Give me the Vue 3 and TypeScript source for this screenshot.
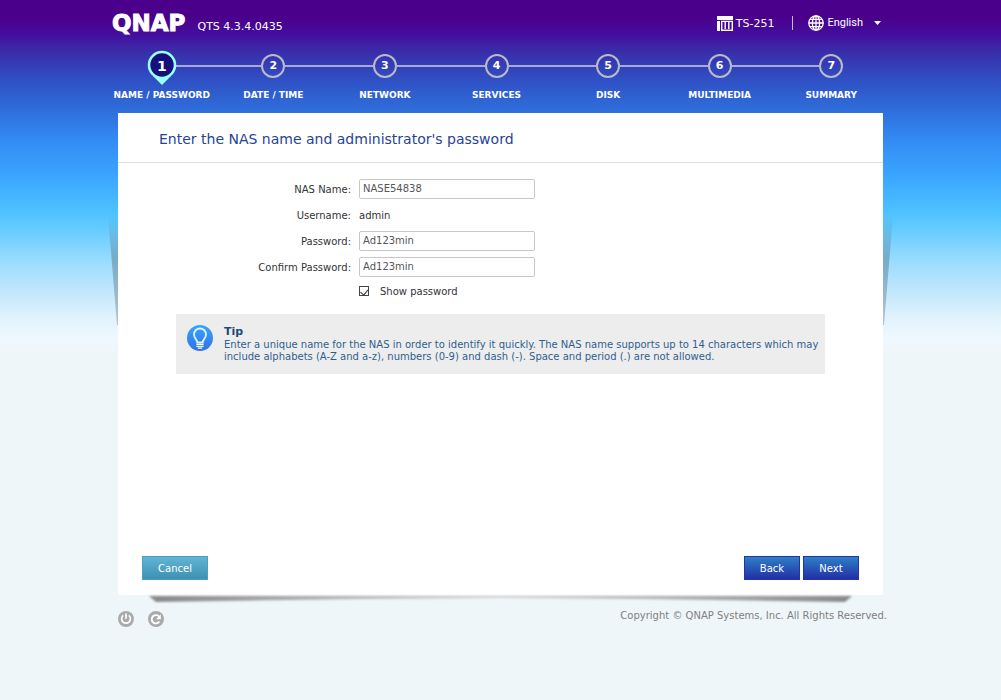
<script setup lang="ts">
import { computed, ref } from 'vue'

interface Step {
  id: number
  label: string
}

const steps: Step[] = [
  { id: 1, label: 'NAME / PASSWORD' },
  { id: 2, label: 'DATE / TIME' },
  { id: 3, label: 'NETWORK' },
  { id: 4, label: 'SERVICES' },
  { id: 5, label: 'DISK' },
  { id: 6, label: 'MULTIMEDIA' },
  { id: 7, label: 'SUMMARY' },
]

const current = ref(1)
const nasName = ref('NASE54838')
const password = ref('Ad123min')
const confirmation = ref('Ad123min')
const showPassword = ref(true)
const fieldType = computed(() => (showPassword.value ? 'text' : 'password'))
</script>

<template>
  <div class="page">
    <div class="wrap">
      <header class="top">
        <span class="brand">QNAP</span>
        <span class="version">QTS 4.3.4.0435</span>
        <div class="model">
          <svg width="16" height="15" viewBox="0 0 16 15" aria-hidden="true">
            <path d="M0 0h16v4H0z M0 5h3v10H0z" fill="#fff" />
            <path d="M4.7 5v9.5h10.6V5 M8.2 5v8 M11.8 5v8" fill="none" stroke="#fff" stroke-width="1.4" />
            <path d="M4 5.4h12M4 14.3h12" stroke="#fff" stroke-width="1.2" />
          </svg>
          <span>TS-251</span>
        </div>
        <span class="divider"></span>
        <button class="language" type="button">
          <svg width="16" height="16" viewBox="0 0 16 16" fill="none" stroke="#fff" stroke-width="1.3" aria-hidden="true">
            <circle cx="8" cy="8" r="7.2" />
            <ellipse cx="8" cy="8" rx="3.6" ry="7.2" />
            <path d="M8 .8v14.4M.8 8h14.4M2 4.4h12M2 11.6h12" />
          </svg>
          <span>English</span>
          <svg class="caret" width="7" height="4" viewBox="0 0 7 4" aria-hidden="true">
            <path d="M0 0h7L3.5 4z" fill="#fff" />
          </svg>
        </button>
      </header>

      <ol class="steps">
        <li v-for="step in steps" :key="step.id" class="step" :class="{ active: step.id === current }">
          <span class="marker">
            <svg v-if="step.id === current" class="pin" width="30" height="36" viewBox="0 0 30 36" aria-hidden="true">
              <path d="M6 26L15 35l9-9z" fill="#9ff" />
              <circle cx="15" cy="15" r="13" fill="#15107c" stroke="#9ff" stroke-width="2.6" />
            </svg>
            <span class="number">{{ step.id }}</span>
          </span>
          <span class="step-label">{{ step.label }}</span>
        </li>
      </ol>

      <main class="panel">
        <svg class="side left" viewBox="0 0 10 110" preserveAspectRatio="none" aria-hidden="true">
          <defs>
            <linearGradient id="side-shade" x1="0" y1="0" x2="0" y2="1">
              <stop offset="0" stop-color="#456" stop-opacity="0" />
              <stop offset=".4" stop-color="#456" stop-opacity=".36" />
              <stop offset="1" stop-color="#456" stop-opacity=".3" />
            </linearGradient>
          </defs>
          <path d="M0 0h10v110H9z" fill="url(#side-shade)" />
        </svg>
        <svg class="side right" viewBox="0 0 10 110" preserveAspectRatio="none" aria-hidden="true">
          <path d="M0 0h10v110H9z" fill="url(#side-shade)" />
        </svg>
        <div class="underside"></div>

        <h1>Enter the NAS name and administrator's password</h1>

        <form class="body" @submit.prevent>
          <div class="fields">
            <label for="nas-name">NAS Name:</label>
            <input id="nas-name" v-model="nasName" type="text" maxlength="14" />
            <span class="caption">Username:</span>
            <span>admin</span>
            <label for="password">Password:</label>
            <input id="password" v-model="password" :type="fieldType" />
            <label for="confirmation">Confirm Password:</label>
            <input id="confirmation" v-model="confirmation" :type="fieldType" />
            <label class="show" for="show-password">
              <input id="show-password" v-model="showPassword" type="checkbox" />
              <span>Show password</span>
            </label>
          </div>

          <section class="tip">
            <svg width="26" height="26" viewBox="0 0 26 26" aria-hidden="true">
              <defs>
                <linearGradient id="bulb-fill" x1="0" y1="0" x2="0" y2="1">
                  <stop offset="0" stop-color="#36a7f8" />
                  <stop offset="1" stop-color="#3170e8" />
                </linearGradient>
              </defs>
              <circle cx="13" cy="13" r="13" fill="url(#bulb-fill)" />
              <path d="M10.3 17.5c0-3-3.3-4-3.3-8a6 6 0 0 1 12 0c0 4-3.3 5-3.3 8z" fill="none" stroke="#e4f1ff" stroke-width="1.8" />
              <path d="M9.4 19.3h7.2M9.4 21.3h7.2M10.8 23.2h4.4" stroke="#fff" stroke-width="1.3" />
            </svg>
            <div>
              <h2>Tip</h2>
              <p>
                Enter a unique name for the NAS in order to identify it quickly. The NAS name supports up to 14
                characters which may include alphabets (A-Z and a-z), numbers (0-9) and dash (-). Space and period (.)
                are not allowed.
              </p>
            </div>
          </section>

          <div class="actions">
            <button class="cancel" type="button">Cancel</button>
            <button class="primary" type="button">Back</button>
            <button class="primary" type="submit">Next</button>
          </div>
        </form>
      </main>

      <footer class="bottom">
        <button class="round" type="button" aria-label="Shut down">
          <svg width="16" height="16" viewBox="0 0 16 16" aria-hidden="true">
            <circle cx="8" cy="8" r="8" fill="#aaa" />
            <path d="M5.2 4.4a4.4 4.4 0 1 0 5.6 0M8 2.6v5.2" fill="none" stroke="#fff" stroke-width="1.7" />
          </svg>
        </button>
        <button class="round" type="button" aria-label="Restart">
          <svg width="16" height="16" viewBox="0 0 16 16" aria-hidden="true">
            <circle cx="8" cy="8" r="8" fill="#aaa" />
            <path d="M11.4 10.6a4.2 4.2 0 1 1-.2-5" fill="none" stroke="#fff" stroke-width="1.8" />
            <path d="M12.8 3.4v4.8H8z" fill="#fff" />
          </svg>
        </button>
        <small>Copyright © QNAP Systems, Inc. All Rights Reserved.</small>
      </footer>
    </div>
  </div>
</template>

<style>
body {
  margin: 0;
  background: #eff6f9;
}
</style>

<style scoped>
* {
  box-sizing: border-box;
}

.page {
  min-height: 100vh;
  font-family: 'DejaVu Sans', Verdana, sans-serif;
  font-size: 10px;
  color: #333;
  background: linear-gradient(
    #4b008c 0,
    #4a008b 18px,
    #4310a0 36px,
    #3a2ba8 50px,
    #2f50c4 80px,
    #2f70dc 112px,
    #348cf4 142px,
    #3aa5ff 175px,
    #4cc0ff 210px,
    #66ccff 230px,
    #98dcfe 260px,
    #bfe6fd 290px,
    #e2f3fd 318px,
    #eff8fe 340px,
    #eff6f9 356px
  );
}

.wrap {
  max-width: 789px;
  margin: 0 auto;
}

button {
  padding: 0;
  border: 0;
  background: none;
  color: #fff;
  font: inherit;
  cursor: pointer;
}

svg {
  display: block;
  flex: none;
}

.top {
  display: flex;
  align-items: center;
  height: 46px;
  padding: 0 14px 0 6px;
  color: #fff;
  font-size: 11px;
}

.brand {
  font-size: 23px;
  font-weight: bold;
  line-height: 24px;
  -webkit-text-stroke: 1px #fff;
}

.version {
  margin-left: 12px;
  padding-top: 6px;
}

.model {
  display: flex;
  align-items: center;
  gap: 3px;
  margin-left: auto;
}

.divider {
  width: 1px;
  height: 14px;
  margin: 0 15px 0 18px;
  background: #cbb8e0;
}

.language {
  display: flex;
  align-items: center;
  gap: 3px;
  font-family: Roboto, sans-serif;
  font-size: 11px;
}

.language span {
  padding-bottom: 2px;
}

.caret {
  margin-left: 8px;
}

.steps {
  display: grid;
  grid-template-columns: repeat(7, 1fr);
  margin: 0 8px 0 0;
  padding: 0 0 12px;
  list-style: none;
  color: #fff;
  font-weight: bold;
}

.step {
  display: flex;
  flex-direction: column;
  align-items: center;
  gap: 4px;
}

.marker {
  display: flex;
  align-items: center;
  align-self: stretch;
  height: 39px;
}

.marker::before,
.marker::after {
  content: '';
  flex: 1;
  height: 2px;
  background: #a9abd6;
}

.step:first-child .marker::before,
.step:last-child .marker::after {
  background: none;
}

.number {
  width: 24px;
  border: 2px solid #b9bbc8;
  border-radius: 50%;
  font-size: 11px;
  line-height: 20px;
  text-align: center;
}

.active .marker {
  position: relative;
}

.active .number {
  position: relative;
  width: 28px;
  border: 0;
  font-size: 14px;
}

.pin {
  position: absolute;
  top: 4px;
  left: calc(50% - 15px);
}

.step-label {
  font-size: 9px;
  line-height: 12px;
  white-space: nowrap;
}

.panel {
  position: relative;
  display: flex;
  flex-direction: column;
  min-height: calc(100vh - 218px);
  margin: 0 12px;
  background: #fff;
}

.side {
  position: absolute;
  top: 102px;
  width: 10px;
  height: 110px;
}

.left {
  right: 100%;
}

.right {
  left: 100%;
  transform: scaleX(-1);
}

.underside {
  position: absolute;
  top: 100%;
  left: 31px;
  right: 31px;
  height: 10px;
  filter: blur(1px);
}

.underside::before {
  content: '';
  display: block;
  height: 10px;
  background: linear-gradient(90deg, #888, #aaa 20%, #d4d4d4 50%, #aaa 80%, #888);
  clip-path: polygon(0 1px, 100% 1px, 99% 7px, 70% 4px, 50% 3px, 30% 4px, 1% 7px);
}

h1 {
  margin: 0;
  padding: 3px 41px 0;
  border-bottom: 1px solid #ddd;
  color: #1f4497;
  font-size: 14px;
  font-weight: normal;
  line-height: 46px;
}

.body {
  display: flex;
  flex: 1;
  flex-direction: column;
  padding: 13px 24px 15px;
}

.fields {
  display: grid;
  grid-template-columns: 209px 176px;
  grid-auto-rows: 26px;
  align-items: center;
  column-gap: 8px;
}

.fields > label,
.caption {
  text-align: right;
}

.fields > input {
  height: 20px;
  padding: 0 3px 1px;
  border: 1px solid #c8c8c8;
  border-radius: 2px;
  background: #fff;
  color: #555;
  font: inherit;
}

.fields > .show {
  grid-column: 2;
  align-self: start;
  display: flex;
  align-items: center;
  gap: 11px;
  height: 22px;
}

.show input {
  appearance: none;
  width: 10px;
  height: 10px;
  margin: 0;
  border: 1px solid #444;
  background: #fff;
}

.show input:checked::before {
  content: '';
  display: block;
  width: 4px;
  height: 7px;
  margin-left: 2px;
  border: solid #333;
  border-width: 0 1px 1px 0;
  transform: rotate(40deg);
}

.tip {
  display: flex;
  gap: 11px;
  margin: 8px 34px 24px;
  padding: 11px 4px 11px 11px;
  background: #ededed;
  color: #2f5f91;
}

.tip h2 {
  margin: 0;
  color: #1c4a7c;
  font-size: 11px;
  line-height: 14px;
}

.tip p {
  margin: 0;
  line-height: 12px;
}

.actions {
  display: flex;
  gap: 3px;
  margin-top: auto;
}

.actions button {
  min-width: 56px;
  height: 24px;
}

.actions .cancel {
  min-width: 66px;
  margin-right: auto;
  border: 1px solid #4c9fbe;
  background: linear-gradient(#62b5d4, #3e90b2);
}

.actions .primary {
  border: 1px solid #2335a4;
  background: linear-gradient(#2d7fc8, #2230a4);
}

.bottom {
  display: flex;
  align-items: flex-start;
  gap: 14px;
  padding: 16px 8px 16px 12px;
}

.round {
  border-radius: 50%;
}

.bottom small {
  margin-left: auto;
  color: #808080;
  font-size: 10px;
  line-height: 10px;
}
</style>
